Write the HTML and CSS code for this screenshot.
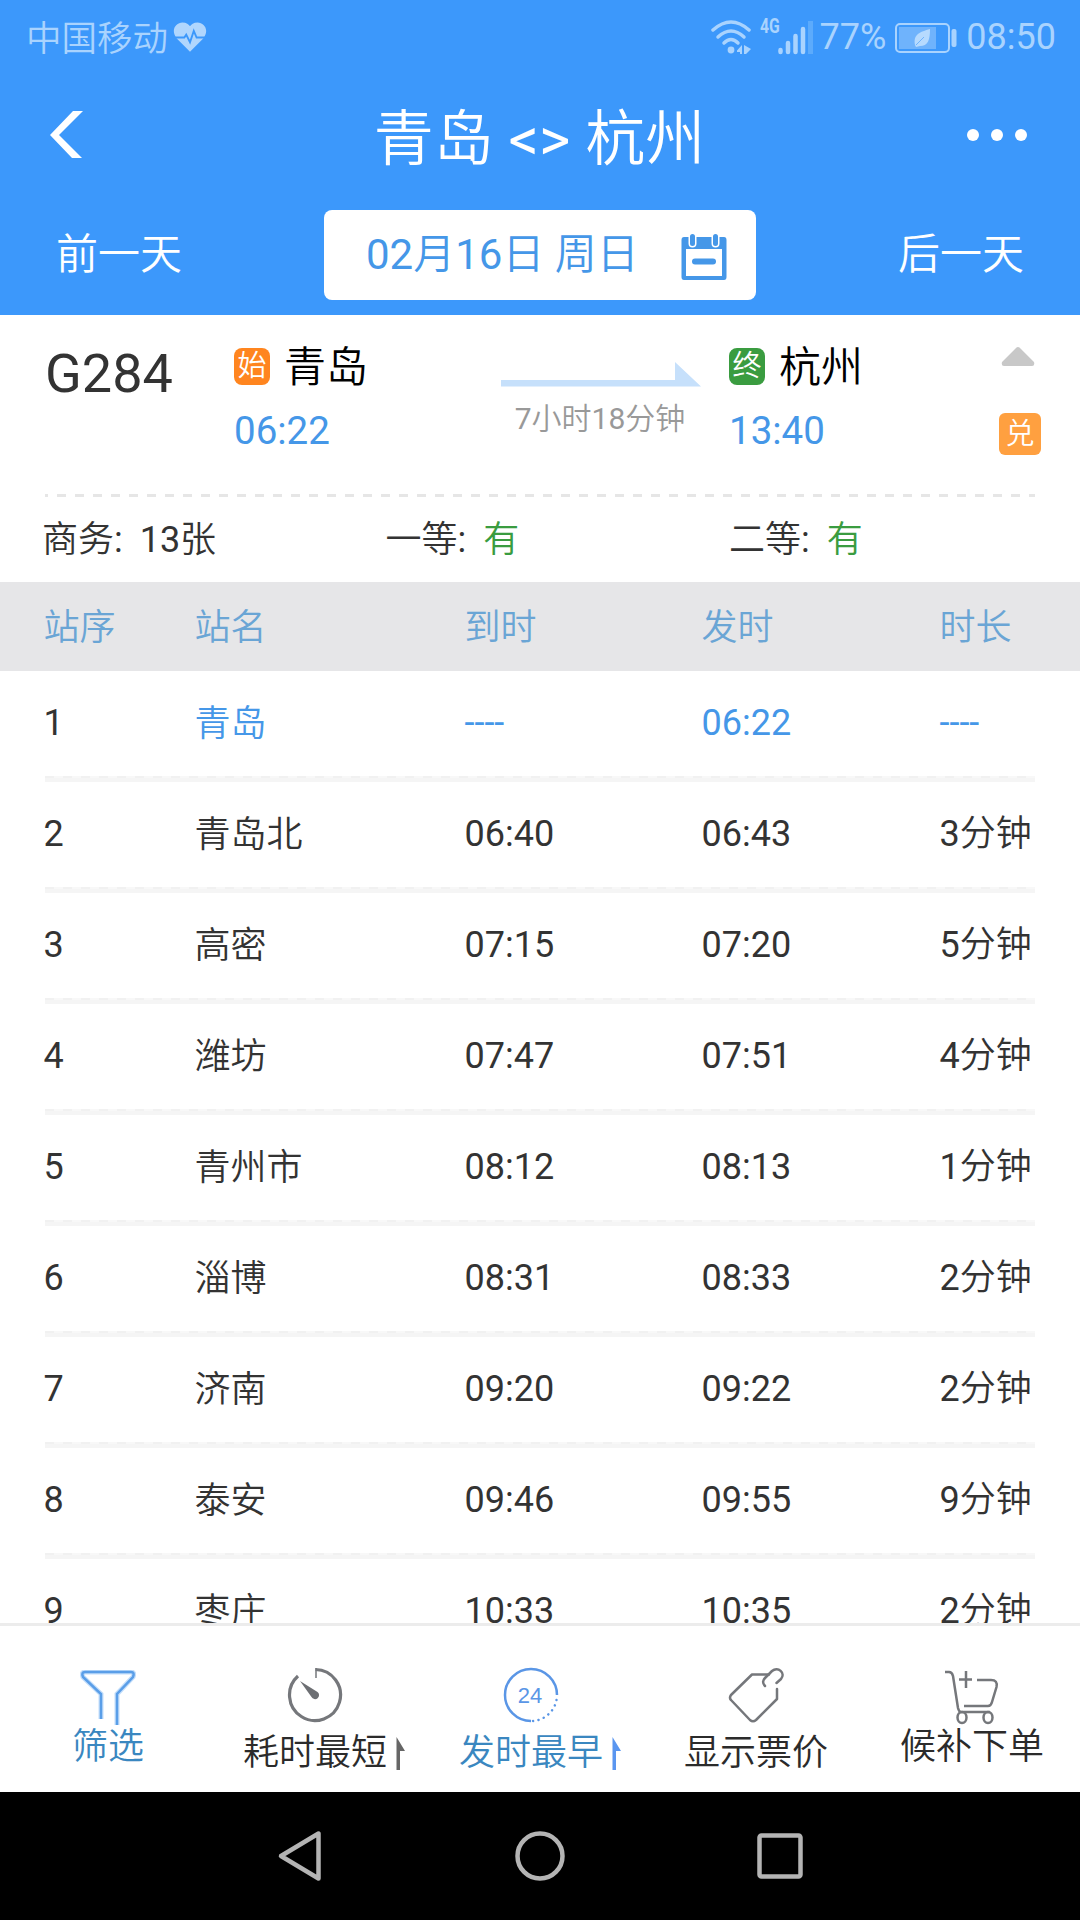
FILE: index.html
```
<!DOCTYPE html>
<html lang="zh-CN">

	<head>
		<meta charset="UTF-8">
		<title>青岛 - 杭州</title>
		<link rel="stylesheet" href="styles.css">
	</head>

	<body>
		<div class="phone">
			<div class="top">
				<!--状态栏-->
				<div class="status">
					<span class="carrier">中国移动</span>
					<svg class="heart" width="34" height="33" viewBox="0 0 36 34">
						<path fill="#b0d6fd" d="M18 32 L4 18 C-3 9 3 1 10 1 C14 1 17 3 18 5 C19 3 22 1 26 1 C33 1 39 9 32 18 Z" />
						<path fill="none" stroke="#3c98fb" stroke-width="2" d="M0 17 H12 L14 14 L18 22 L22 10 L25 17 H36" />
					</svg>
					<span class="space"></span>
					<svg class="wifi" width="40" height="36" viewBox="0 0 40 36">
						<g fill="none" stroke="#a9d3fe" stroke-width="3.500" stroke-linecap="round">
							<path d="M2 10 Q20 -6 38 10" />
							<path d="M7 17 Q20 5 33 17" />
							<path d="M13 23 Q20 16 27 23" />
						</g>
						<circle cx="20" cy="30" r="3.400" fill="#a9d3fe" />
						<path fill="#a9d3fe" d="M26 30.500 L31 25 V34 H29 V32 H26 Z M33 25 L40 29 L35 34 H33 Z" />
					</svg>
					<span class="net">4G</span>
					<svg class="signal" width="36" height="36" viewBox="0 0 36 36">
						<path stroke="#a9d3fe" stroke-width="4.500" stroke-linecap="round" d="M2.500 30 V32 M10 23 V32 M17.500 16 V32 M25 9 V32" />
						<path fill="#5cabfc" d="M30 1 h5 v33 h-5z" />
					</svg>
					<span class="power">77%</span>
					<svg class="battery" width="62" height="32" viewBox="0 0 62 32">
						<rect x="1" y="2" width="53" height="28" rx="4" fill="none" stroke="#a9d3fe" stroke-width="2" />
						<rect x="4" y="5" width="37" height="22" fill="#6fb3fc" />
						<path fill="#b6dafe" d="M35 7 C35 18 33 24 25 24 L21 25 L20 23 C18 12 25 10 35 7 Z" />
						<path stroke="#6fb3fc" stroke-width="1" d="M21 23 L29 15" />
						<rect x="56.500" y="7" width="5" height="18" rx="2" fill="#a9d3fe" />
					</svg>
					<span class="clock">08:50</span>
				</div>
				<!--标题-->
				<div class="title">
					<svg width="34" height="48" viewBox="0 0 34 48">
						<path fill="#fff" d="M23 0 H33 L9 24 L32 47 H22 L0 24 Z" />
					</svg>
					<h1>青岛 &lt;&gt; 杭州</h1>
					<svg width="60" height="12" viewBox="0 0 60 12">
						<g fill="#fff">
							<circle cx="6" cy="6" r="6" />
							<circle cx="30" cy="6" r="6" />
							<circle cx="54" cy="6" r="6" />
						</g>
					</svg>
				</div>
				<!--日期-->
				<div class="days">
					<a>前一天</a>
					<div class="date">
						<span>02月16日 周日</span>
						<svg width="46" height="46" viewBox="0 0 46 46">
							<path fill="#4597e8" fill-rule="evenodd" d="M3 3 H43 Q45.500 3 45.500 6 V43 Q45.500 46 43 46 H3 Q0.500 46 0.500 43 V6 Q0.500 3 3 3 Z M5 15 V42 H41 V15 Z" />
							<path stroke="#fff" stroke-width="8" stroke-linecap="round" d="M11.500 2 V9.500 M34.500 2 V9.500" />
							<path stroke="#4597e8" stroke-width="5" stroke-linecap="round" d="M11.500 2.500 V9.500 M34.500 2.500 V9.500" />
							<path stroke="#4597e8" stroke-width="6" stroke-linecap="round" d="M14 27.500 H32" />
						</svg>
					</div>
					<a>后一天</a>
				</div>
			</div>

			<!--车次信息-->
			<div class="train">
				<div class="no">G284</div>
				<div class="station">
					<p><i class="tag start">始</i>青岛</p>
					<b>06:22</b>
				</div>
				<div class="cost">
					<svg width="200" height="26" viewBox="0 0 200 26">
						<path fill="#c6e0fb" d="M0 18 H174 V0 L200 24.500 H0 Z" />
					</svg>
					<span>7小时18分钟</span>
				</div>
				<div class="station end">
					<p><i class="tag stop">终</i>杭州</p>
					<b>13:40</b>
				</div>
				<div class="side">
					<svg width="34" height="20" viewBox="0 0 34 20">
						<path fill="#c8c8c8" d="M17 0 Q18.500 0 20 2 L33 15 Q34 19 31 19 H3 Q0 19 1 15 L14 2 Q15.500 0 17 0 Z" />
					</svg>
					<i class="swap">兑</i>
				</div>
			</div>
			<svg class="dash" width="990" height="3">
				<path stroke="#e6e6e6" stroke-width="3" stroke-dasharray="9 9" stroke-dashoffset="6" d="M0 1.500 H990" />
			</svg>
			<div class="seats">
				<span>商务: <em class="num">13张</em></span>
				<span>一等: <em>有</em></span>
				<span>二等: <em>有</em></span>
			</div>

			<!--经停站-->
			<div class="row head"><span>站序</span><span>站名</span><span>到时</span><span>发时</span><span>时长</span></div>
			<div class="list">
				<div class="row now"><span>1</span><span>青岛</span><span>----</span><span>06:22</span><span>----</span></div>
				<div class="row"><span>2</span><span>青岛北</span><span>06:40</span><span>06:43</span><span>3分钟</span></div>
				<div class="row"><span>3</span><span>高密</span><span>07:15</span><span>07:20</span><span>5分钟</span></div>
				<div class="row"><span>4</span><span>潍坊</span><span>07:47</span><span>07:51</span><span>4分钟</span></div>
				<div class="row"><span>5</span><span>青州市</span><span>08:12</span><span>08:13</span><span>1分钟</span></div>
				<div class="row"><span>6</span><span>淄博</span><span>08:31</span><span>08:33</span><span>2分钟</span></div>
				<div class="row"><span>7</span><span>济南</span><span>09:20</span><span>09:22</span><span>2分钟</span></div>
				<div class="row"><span>8</span><span>泰安</span><span>09:46</span><span>09:55</span><span>9分钟</span></div>
				<div class="row"><span>9</span><span>枣庄</span><span>10:33</span><span>10:35</span><span>2分钟</span></div>
			</div>

			<!--底部菜单-->
			<div class="tabs">
				<div class="tab on">
					<div class="item">
						<svg width="56" height="56" viewBox="0 0 56 56">
							<path fill="none" stroke="#c3defb" stroke-width="5" d="M21 49 V24 L3 7 Q1 2 5 2 H51 Q55 2 53 7 L37 24 V55" />
							<path fill="none" stroke="#5a9ee8" stroke-width="2.500" d="M21 49 V24 L3 7 Q1 2 5 2 H51 Q55 2 53 7 L37 24 V55" />
						</svg>
						<span>筛选</span>
					</div>
				</div>
				<div class="tab low">
					<div class="item">
						<svg width="56" height="56" viewBox="0 0 56 56">
							<path fill="none" stroke="#75777b" stroke-width="3.200" d="M28.500 2.500 A25.500 25.500 0 1 1 11 9" />
							<path fill="none" stroke="#75777b" stroke-width="1.500" d="M29 1 V11" />
							<path fill="#6d6f73" d="M13 14 L30.500 25 A4 4 0 1 1 24.500 30 Z" />
						</svg>
						<span>耗时最短</span>
					</div>
					<svg class="up" width="9" height="34" viewBox="0 0 9 34">
						<path fill="#666" d="M0.500 0 L9 14 H4 V33 H0.500 Z" />
					</svg>
				</div>
				<div class="tab low on">
					<div class="item">
						<svg width="56" height="56" viewBox="0 0 56 56">
							<path fill="none" stroke="#5a96e6" stroke-width="2.500" d="M28 54 A26 26 0 1 1 54 28" />
							<path fill="none" stroke="#5a96e6" stroke-width="2.500" stroke-linecap="round" stroke-dasharray="0.100 5.500" d="M53.500 33 A26 26 0 0 1 30 54" />
							<text x="27" y="35.500" text-anchor="middle" class="hour">24</text>
						</svg>
						<span>发时最早</span>
					</div>
					<svg class="up" width="9" height="34" viewBox="0 0 9 34">
						<path fill="#5a96f0" d="M0.500 0 L9 14 H4 V33 H0.500 Z" />
					</svg>
				</div>
				<div class="tab low">
					<div class="item">
						<svg width="56" height="56" viewBox="0 0 56 56">
							<g fill="none" stroke="#75777b" stroke-width="2.500" stroke-linejoin="round" stroke-linecap="round">
								<path d="M41 7.500 H24 L3 28 Q1 31 3 33 L22 53 Q25 55.500 28 53 L49 32 V22" />
								<path d="M37 19 C34 16 35 13 37 11 L44 4 C50 -1 58 6 53 12 L48.500 16" />
							</g>
						</svg>
						<span>显示票价</span>
					</div>
				</div>
				<div class="tab">
					<div class="item">
						<svg width="56" height="56" viewBox="0 0 56 56">
							<g fill="none" stroke="#75777b" stroke-width="2.500">
								<path d="M1 2 H5 Q8 2 9 6 L14 38 Q15 42 17 42 H46" />
								<path d="M20 36 H44 Q47 36 48 32 L52.500 17 Q54 10 47 10 H33" />
								<path d="M22 1 V18 M15 9.500 H28" />
								<ellipse cx="18" cy="47.500" rx="4.500" ry="5.500" />
								<ellipse cx="44" cy="47.500" rx="4.500" ry="5.500" />
							</g>
						</svg>
						<span>候补下单</span>
					</div>
				</div>
			</div>

			<!--系统导航-->
			<div class="nav">
				<svg width="50" height="54" viewBox="0 0 50 54">
					<path fill="none" stroke="#b4b4b4" stroke-width="4.500" stroke-linejoin="round" d="M43.500 4.500 V49.500 L6 27 Z" />
				</svg>
				<svg width="50" height="54" viewBox="0 0 50 54">
					<circle cx="25" cy="27" r="22.500" fill="none" stroke="#b4b4b4" stroke-width="4.500" />
				</svg>
				<svg width="50" height="54" viewBox="0 0 50 54">
					<rect x="4.500" y="6.500" width="41" height="41" rx="2" fill="none" stroke="#b4b4b4" stroke-width="4.500" />
				</svg>
			</div>
		</div>
	</body>

</html>
```

FILE: styles.css
```
* {
	margin: 0;
	padding: 0;
	box-sizing: border-box;
}

body {
	font-family: Roboto, "Noto Sans CJK SC DemiLight", "Noto Sans CJK SC", sans-serif;
	font-size: 36px;
	color: #333;
}

i,
em,
b,
h1 {
	font-style: normal;
	font-weight: 400;
}

svg {
	display: block;
	flex: none;
}

span,
p,
a {
	white-space: nowrap;
}

.phone {
	width: 1080px;
	height: 1920px;
	background: #fff;
	display: flex;
	flex-direction: column;
	overflow: hidden;
}

/*头部*/
.top {
	height: 315px;
	background: #3c98fb;
	color: #fff;
}

.status {
	display: flex;
	align-items: center;
	height: 75px;
	padding: 0 24px 0 26px;
	color: #a9d3fe;
	line-height: 77px;
}

.carrier {
	width: 147px;
	padding-top: 3px;
	font-size: 35.5px;
}

.space {
	flex: 1;
}

.net {
	margin: -22px 0 0 9px;
	width: 18px;
	font-size: 21px;
	font-weight: 700;
	transform: scaleX(0.75);
	transform-origin: left;
}

.power {
	margin: 0 9px 0 6px;
}

.clock {
	margin-left: 9px;
}

.title {
	display: flex;
	justify-content: space-between;
	align-items: center;
	height: 120px;
	padding: 0 53px 0 50px;
}

.title h1 {
	margin: -4px 0 0 28px;
	font-size: 60px;
}

.days {
	display: flex;
	justify-content: space-between;
	padding: 15px 56px 0;
	font-size: 42px;
	line-height: 90px;
}

.date {
	display: flex;
	justify-content: space-between;
	align-items: center;
	width: 432px;
	height: 90px;
	padding: 0 29px 0 42px;
	border-radius: 8px;
	background: #fff;
	color: #4597e8;
	line-height: 86px;
}

.date svg {
	margin-top: 3px;
}

/*车次*/
.train {
	display: flex;
	height: 179px;
	padding: 21px 39px 0 45px;
	line-height: 60px;
}

.no {
	width: 189px;
	padding-top: 8px;
	font-size: 54px;
}

.station {
	width: 267px;
	color: #000;
	font-size: 42px;
}

.station p {
	display: flex;
	align-items: center;
	height: 60px;
	line-height: 60px;
	padding-top: 4px;
}

.station b {
	display: block;
	font-size: 38.5px;
	line-height: 70px;
	color: #4597e8;
}

.tag {
	width: 36px;
	height: 37px;
	margin: -4px 14px 0 0;
	border-radius: 8px;
	color: #fff;
	font-size: 29px;
	line-height: 36px;
	text-align: center;
}

.start {
	background: #ff851f;
}

.stop {
	background: #3a9c40;
}

.cost {
	width: 228px;
	padding-top: 26px;
	color: #999;
	font-size: 30px;
}

.cost span {
	display: block;
	width: 198px;
	line-height: 62px;
	text-align: center;
}

.side {
	display: flex;
	flex-direction: column;
	align-items: flex-end;
	flex: 1;
	padding-top: 11px;
}

.side svg {
	margin-right: 6px;
}

.swap {
	width: 42px;
	height: 42px;
	margin-top: 46px;
	border-radius: 6px;
	background: #ffa040;
	color: #fff;
	font-size: 29px;
	line-height: 42px;
	text-align: center;
}

.dash {
	margin-left: 45px;
}

.seats {
	display: flex;
	height: 85px;
	padding-left: 42px;
	line-height: 87px;
}

.seats span {
	width: 343.5px;
}

.seats em {
	margin-left: 8px;
	color: #3a9c40;
}

.seats .num {
	color: #333;
}

/*时刻表*/
.row {
	display: grid;
	grid-template-columns: 151px 270px 237px 238px 1fr;
	height: 111px;
	margin: 0 45px;
	border-bottom: 4px solid #f5f5f5;
	background: repeating-linear-gradient(90deg, #f1f1f1 0 9px, #f8f8f8 9px 18px) bottom / 100% 2px no-repeat;
	line-height: 104px;
}

.row span {
	margin-left: -1.5px;
}

.row span:nth-child(2) {
	line-height: 106px;
}

.head {
	height: 89px;
	margin: 0;
	padding: 0 45px;
	border: 0;
	background: #e6e6e8;
	color: #6aa5d5;
	line-height: 92px;
}

.head span:nth-child(2) {
	line-height: 92px;
}

.list {
	height: 952px;
	overflow: hidden;
}

.now span {
	color: #4597e8;
}

.now span:first-child {
	color: #333;
}

/*底部*/
.tabs {
	display: flex;
	height: 169px;
	border-top: 3px solid #ececec;
	color: #2b2b2b;
}

.tab {
	display: flex;
	justify-content: center;
	width: 216px;
	padding-top: 44px;
}

.item {
	display: flex;
	flex-direction: column;
	align-items: center;
}

.item span {
	line-height: 43px;
}

.low {
	padding-top: 41px;
}

.low .item span {
	margin-top: 9px;
}

.on {
	color: #3a87c0;
}

.hour {
	fill: #5a96e6;
	font-family: "Liberation Sans", sans-serif;
	font-size: 22px;
}

.up {
	margin: 70px 0 0 9px;
}

.nav {
	display: flex;
	justify-content: center;
	align-items: center;
	gap: 190px;
	height: 128px;
	background: #000;
}
```
